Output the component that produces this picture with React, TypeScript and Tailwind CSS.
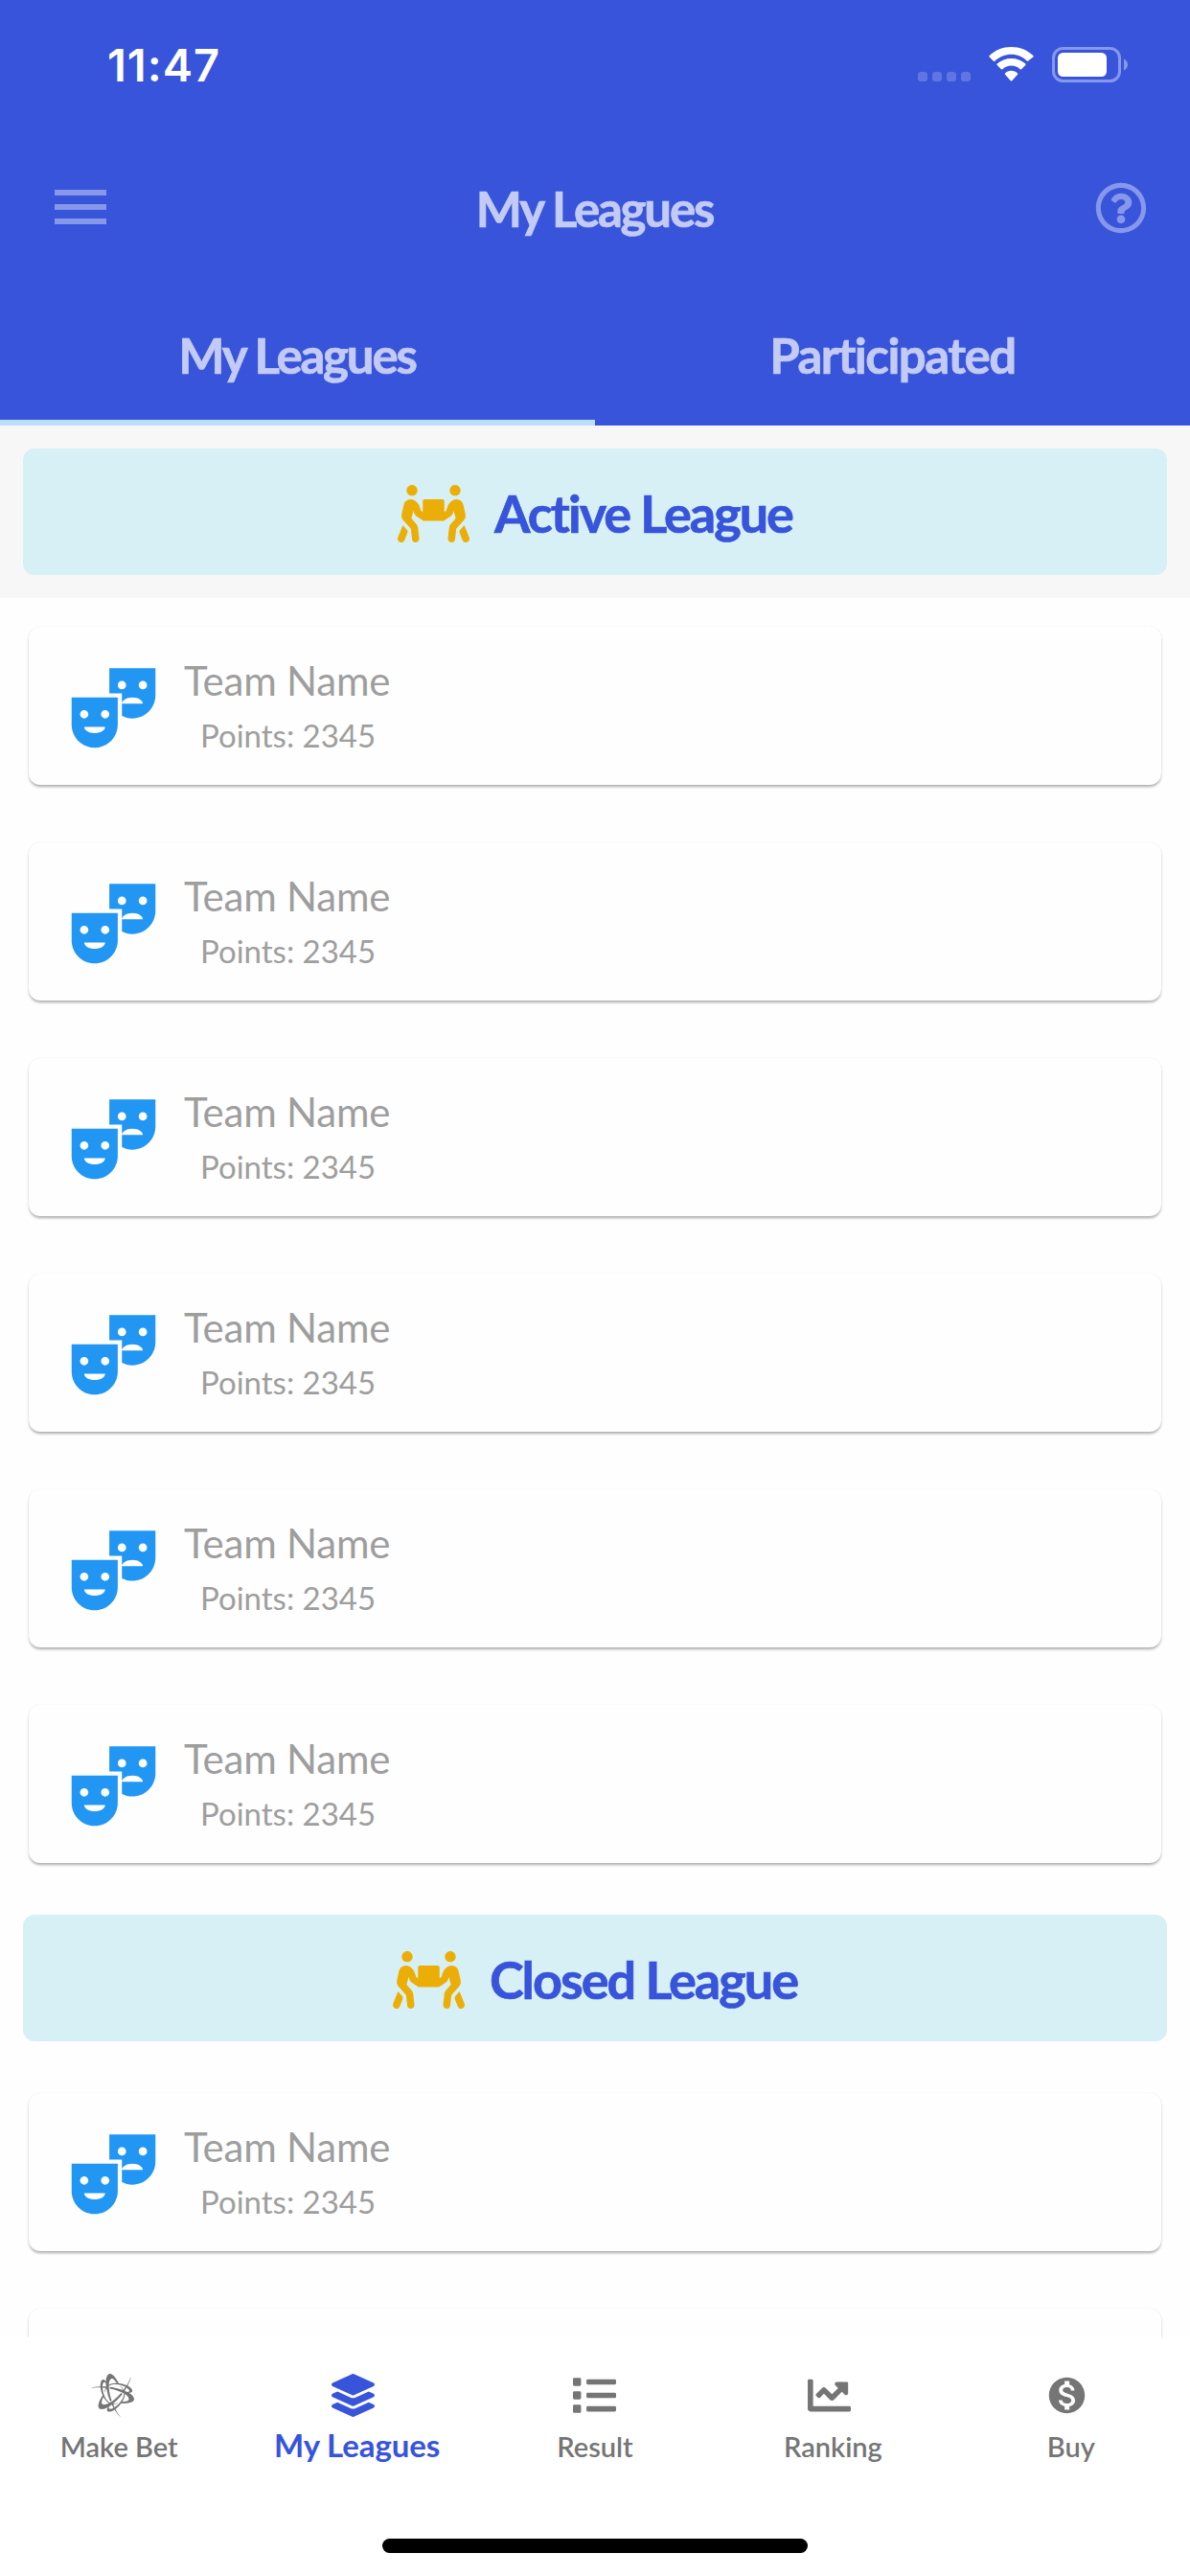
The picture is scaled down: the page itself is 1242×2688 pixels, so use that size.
import React from 'react';
import {
  FaPeopleCarry,
  FaBattleNet,
  FaLayerGroup,
  FaList,
  FaChartLine,
  FaRegQuestionCircle,
} from 'react-icons/fa';
import { MdTheaterComedy, MdMonetizationOn, MdMenu } from 'react-icons/md';

function StatusBar() {
  return (
    <div className="flex h-[132px] items-start justify-between pl-[112px] pr-[65px] text-white">
      <span className="mt-[40px] font-['Inter',sans-serif] text-[47px] font-semibold leading-[56px] tracking-[1px]">
        11:47
      </span>
      <div className="mt-[49px] flex h-[37px] items-start">
        <div className="mt-[26px] flex gap-[5px]">
          {[0, 1, 2, 3].map((dot) => (
            <span key={dot} className="size-[10px] rounded-[3px] bg-white/20" />
          ))}
        </div>
        <svg className="ml-[19px] h-[36px] w-[47px]" viewBox="0 0 47 36" fill="currentColor">
          <path d="M23.5 7.8c6.200 0 11.900 2.400 16.200 6.700.4.4 1 .4 1.400 0l5.200-4.100c.5-.4.5-1 0-1.500C40.300 3.300 32.300 0 23.500 0S6.700 3.300.7 8.900c-.5.5-.5 1.100 0 1.500l4.200 4.300c.4.4 1 .4 1.400 0C11.100 10.200 17.300 7.800 23.500 7.800z" />
          <path d="M23.500 19.600c3.500 0 6.700 1.400 9.100 3.600.4.4 1 .4 1.400 0l4.300-4.200c.4-.4.4-1 0-1.400-3.900-3.600-9.100-5.600-14.800-5.600s-10.900 2-14.800 5.600c-.4.4-.4 1 0 1.400l4.300 4.200c.4.4 1 .4 1.400 0 2.400-2.200 5.600-3.600 9.100-3.600z" />
          <path d="M30 28.800c.4-.4.4-1 0-1.400-1.700-1.600-4-2.600-6.500-2.600s-4.800 1-6.500 2.600c-.4.4-.4 1 0 1.400l5.800 6.400c.4.4 1 .4 1.400 0z" />
        </svg>
        <svg className="ml-[19px] h-[37px] w-[79px]" viewBox="0 0 79 37">
          <rect x="1.500" y="1.500" width="69" height="34" rx="10" fill="none" stroke="white" strokeOpacity=".4" strokeWidth="3" />
          <rect x="6" y="6" width="51" height="25" rx="5.500" fill="white" />
          <path d="M75 12.500c2.400 1 4 3.400 4 6s-1.600 5-4 6z" fill="white" fillOpacity=".4" />
        </svg>
      </div>
    </div>
  );
}

function Header() {
  return (
    <header className="h-[444px] shrink-0 bg-[#3754db] text-[#c3cbf4]">
      <StatusBar />
      <div className="flex h-[168px] items-center justify-between pl-[48px] pr-[45px]">
        <MdMenu className="size-[72px] text-[#8797e9]" />
        <h1 className="mr-[4px] mt-[4px] text-[51px] font-bold leading-[60px] tracking-[-2.2px] [-webkit-text-stroke:0.7px_#c3cbf4]">
          My Leagues
        </h1>
        <div className="flex w-[72px] justify-end">
          <FaRegQuestionCircle className="mt-px size-[54px] text-[#8797e9]" />
        </div>
      </div>
      <div className="grid h-[144px] grid-cols-2 text-center text-[51px] font-bold leading-[142px] [-webkit-text-stroke:0.7px_#c3cbf4]">
        <div className="h-[144px] border-b-6 border-[#bbdefb] tracking-[-2.2px]">
          <span className="mr-[1px]">My Leagues</span>
        </div>
        <div className="tracking-[-1.5px]">Participated</div>
      </div>
    </header>
  );
}

function Banner({ title }: { title: string }) {
  return (
    <div className="mx-6 flex h-[132px] shrink-0 items-center justify-center gap-[26px] rounded-[12px] bg-[#d7f0f5]">
      <FaPeopleCarry className="mt-[3px] h-[60px] w-[75px] text-[#ebae06]" />
      <h2 className="mt-[4px] text-[54px] font-bold leading-[64px] tracking-[-2px] text-[#3754db] [-webkit-text-stroke:0.7px_#3754db]">
        {title}
      </h2>
    </div>
  );
}

function TeamCard() {
  return (
    <div className="mx-[30px] flex h-[165px] shrink-0 rounded-[12px] bg-[#fefefe] pl-[36px] shadow-[0_3px_3px_-1px_rgba(0,0,0,0.2),0_2px_3px_rgba(0,0,0,0.14),0_0_1px_rgba(0,0,0,0.1)]">
      <MdTheaterComedy className="mt-[30px] size-[105px] text-[#2196f3]" />
      <div className="ml-[21px] pt-[28px] text-[#9e9e9e]">
        <p className="text-[42px] leading-[56px] tracking-[-0.2px]">Team Name</p>
        <p className="ml-[17px] mt-[7px] text-[33px] leading-[44px]">Points: 2345</p>
      </div>
    </div>
  );
}

const tabs = [
  { label: 'Make Bet', icon: <FaBattleNet className="-ml-[14px] size-[45px]" /> },
  { label: 'My Leagues', icon: <FaLayerGroup className="-ml-[8px] size-[45px]" />, active: true },
  { label: 'Result', icon: <FaList className="size-[45px]" /> },
  { label: 'Ranking', icon: <FaChartLine className="-ml-[8px] size-[45px]" /> },
  { label: 'Buy', icon: <MdMonetizationOn className="-ml-[8px] size-[45px]" /> },
];

function BottomNav() {
  return (
    <nav className="flex h-[249px] shrink-0 flex-col items-center bg-white">
      <div className="grid h-[210px] w-full grid-cols-5 pt-[38px]">
        {tabs.map((tab) => (
          <div key={tab.label} className={tab.active ? 'flex flex-col items-center text-[#3754db]' : 'flex flex-col items-center text-[#757575]'}>
            {tab.icon}
            <span className={tab.active ? 'mt-[9px] text-[33px] font-bold leading-[40px] tracking-[-0.1px]' : 'mt-[11px] text-[29px] font-semibold leading-[40px]'}>
              {tab.label}
            </span>
          </div>
        ))}
      </div>
      <div className="h-[15px] w-[444px] rounded-full bg-black" />
    </nav>
  );
}

export default function App() {
  return (
    <div className="flex h-[2688px] w-[1242px] flex-col overflow-hidden bg-[#fefefe] font-['Lato',sans-serif]">
      <Header />
      <main className="flex h-[1995px] shrink-0 flex-col overflow-hidden">
        <div className="h-[180px] shrink-0 bg-[#f7f7f7] pt-6">
          <Banner title="Active League" />
        </div>
        <div className="flex shrink-0 flex-col gap-[60px] pb-[54px] pt-[30px]">
          {[1, 2, 3, 4, 5, 6].map((team) => (
            <TeamCard key={team} />
          ))}
        </div>
        <Banner title="Closed League" />
        <div className="flex shrink-0 flex-col gap-[60px] pt-[54px]">
          <TeamCard />
          <div className="mx-[30px] h-[165px] rounded-[12px] bg-[#fefefe] shadow-[0_3px_3px_-1px_rgba(0,0,0,0.2),0_2px_3px_rgba(0,0,0,0.14),0_0_1px_rgba(0,0,0,0.1)]" />
        </div>
      </main>
      <BottomNav />
    </div>
  );
}
